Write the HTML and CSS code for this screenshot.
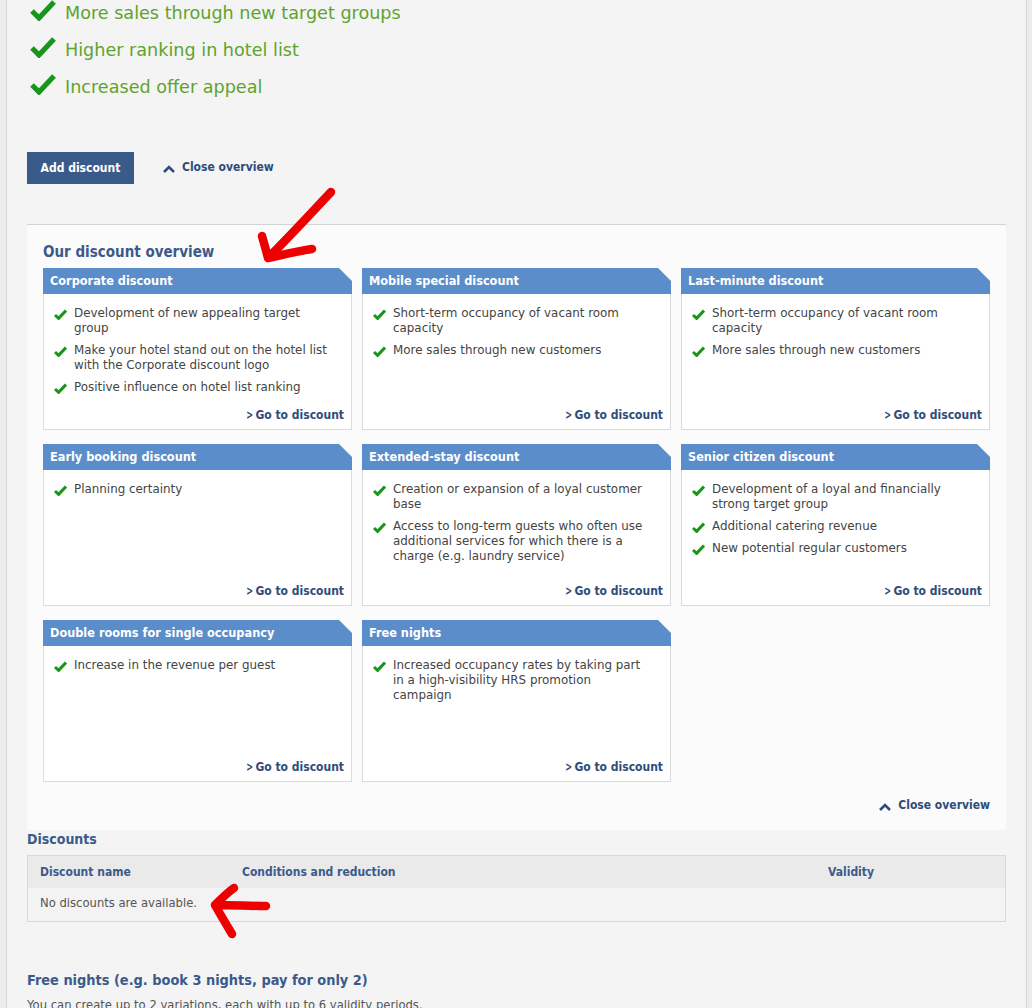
FILE: index.html
```html
<!DOCTYPE html>
<html lang="en">
<head>
<meta charset="utf-8">
<title>Discounts</title>
<link rel="stylesheet" href="styles.css">
</head>
<body>
<div class="page">
  <div class="main">
    <ul class="benefits">
      <li><svg class="bigcheck" viewBox="0 0 26 22"><path d="M2 12 L9 19 L24 3" /></svg>More sales through new target groups</li>
      <li><svg class="bigcheck" viewBox="0 0 26 22"><path d="M2 12 L9 19 L24 3" /></svg>Higher ranking in hotel list</li>
      <li><svg class="bigcheck" viewBox="0 0 26 22"><path d="M2 12 L9 19 L24 3" /></svg>Increased offer appeal</li>
    </ul>

    <div class="actions">
      <button class="btn">Add discount</button>
      <a class="toggle"><svg class="chev" viewBox="0 0 14 10"><path d="M2 8 L7 3 L12 8" /></svg>Close overview</a>
    </div>

    <section class="overview">
      <h2 class="ov-title">Our discount overview</h2>
      <div class="cards">
        <div class="card">
          <div class="card-head">Corporate discount</div>
          <div class="card-body">
            <ul class="points">
              <li>Development of new appealing target group</li>
              <li>Make your hotel stand out on the hotel list with the Corporate discount logo</li>
              <li>Positive influence on hotel list ranking</li>
            </ul>
            <a class="go"><span class="gt">&gt;</span>Go to discount</a>
          </div>
        </div>
        <div class="card">
          <div class="card-head">Mobile special discount</div>
          <div class="card-body">
            <ul class="points">
              <li>Short-term occupancy of vacant room capacity</li>
              <li>More sales through new customers</li>
            </ul>
            <a class="go"><span class="gt">&gt;</span>Go to discount</a>
          </div>
        </div>
        <div class="card">
          <div class="card-head">Last-minute discount</div>
          <div class="card-body">
            <ul class="points">
              <li>Short-term occupancy of vacant room capacity</li>
              <li>More sales through new customers</li>
            </ul>
            <a class="go"><span class="gt">&gt;</span>Go to discount</a>
          </div>
        </div>
        <div class="card">
          <div class="card-head">Early booking discount</div>
          <div class="card-body">
            <ul class="points">
              <li>Planning certainty</li>
            </ul>
            <a class="go"><span class="gt">&gt;</span>Go to discount</a>
          </div>
        </div>
        <div class="card">
          <div class="card-head">Extended-stay discount</div>
          <div class="card-body">
            <ul class="points">
              <li>Creation or expansion of a loyal customer base</li>
              <li>Access to long-term guests who often use additional services for which there is a charge (e.g. laundry service)</li>
            </ul>
            <a class="go"><span class="gt">&gt;</span>Go to discount</a>
          </div>
        </div>
        <div class="card">
          <div class="card-head">Senior citizen discount</div>
          <div class="card-body">
            <ul class="points">
              <li>Development of a loyal and financially strong target group</li>
              <li>Additional catering revenue</li>
              <li>New potential regular customers</li>
            </ul>
            <a class="go"><span class="gt">&gt;</span>Go to discount</a>
          </div>
        </div>
        <div class="card">
          <div class="card-head">Double rooms for single occupancy</div>
          <div class="card-body">
            <ul class="points">
              <li>Increase in the revenue per guest</li>
            </ul>
            <a class="go"><span class="gt">&gt;</span>Go to discount</a>
          </div>
        </div>
        <div class="card">
          <div class="card-head">Free nights</div>
          <div class="card-body">
            <ul class="points">
              <li>Increased occupancy rates by taking part in a high-visibility HRS promotion campaign</li>
            </ul>
            <a class="go"><span class="gt">&gt;</span>Go to discount</a>
          </div>
        </div>
      </div>
      <div class="ov-foot">
        <a class="toggle"><svg class="chev" viewBox="0 0 14 10"><path d="M2 8 L7 3 L12 8" /></svg>Close overview</a>
      </div>
    </section>

    <h3 class="sec-title">Discounts</h3>
    <div class="table">
      <div class="thead">
        <span class="c1">Discount name</span>
        <span class="c2">Conditions and reduction</span>
        <span class="c3">Validity</span>
      </div>
      <div class="tbody">No discounts are available.</div>
    </div>

    <h3 class="sec-title free">Free nights (e.g. book 3 nights, pay for only 2)</h3>
    <p class="note">You can create up to 2 variations, each with up to 6 validity periods.</p>
  </div>

  <svg class="arrow arrow1" viewBox="0 0 90 90" width="90" height="90">
    <path d="M77 6 C60 24 40 46 14 72 M14 72 C12 64 10 57 8 50 M14 72 C28 69 44 65 58 63" />
  </svg>
  <svg class="arrow arrow2" viewBox="0 0 80 60" width="80" height="60">
    <path d="M68 24 C52 24 36 23 17 23 M17 23 C24 16 30 10 36 6 M17 23 C22 32 28 42 34 52" />
  </svg>
</div>
</body>
</html>
```

FILE: styles.css
```css
* { box-sizing: border-box; }
html, body { margin: 0; padding: 0; }
body {
  background: #ececec;
  font-family: "DejaVu Sans", Verdana, sans-serif;
  color: #444;
  height: 1008px;
  overflow: hidden;
}
.page {
  position: relative;
  padding: 0 5px 0 6px;
}
.main {
  background: #f4f4f4;
  border-left: 1px solid #d6d6d6;
  border-right: 1px solid #d6d6d6;
  padding: 0 20px 0 20px;
  min-height: 1008px;
}

.benefits {
  list-style: none;
  margin: 0;
  padding: 0 0 0 3px;
  position: relative;
  top: -6px;
}
.benefits li {
  display: flex;
  align-items: center;
  height: 37px;
  font-size: 17.6px;
  color: #5ea32f;
}
.bigcheck {
  width: 26px;
  height: 22px;
  margin-right: 9px;
  margin-top: -6px;
}
.bigcheck path {
  fill: none;
  stroke: #17961b;
  stroke-width: 5.2;
  stroke-linecap: butt;
  stroke-linejoin: miter;
}

.actions {
  display: flex;
  align-items: center;
  margin-top: 41px;
  height: 32px;
}
.btn {
  background: #3a5a8a;
  color: #fff;
  border: 0;
  height: 32px;
  width: 107px;
  font-family: "DejaVu Sans Condensed", "DejaVu Sans", sans-serif;
  font-weight: bold;
  font-size: 12px;
  padding: 0;
  margin-right: 28px;
}
.toggle {
  display: inline-flex;
  align-items: center;
  color: #2f4c7a;
  font-family: "DejaVu Sans Condensed", "DejaVu Sans", sans-serif;
  font-weight: bold;
  font-size: 12px;
  margin-top: -2px;
}
.chev {
  width: 14px;
  height: 10px;
  margin-right: 6px;
  margin-top: 3px;
}
.chev path {
  fill: none;
  stroke: #2f4c7a;
  stroke-width: 2.6;
}

.overview {
  margin-top: 40px;
  border-top: 1px solid #d4d4d4;
  background: #fbfbfb;
  padding: 17px 15px 0 16px;
}
.ov-title {
  margin: 0;
  font-family: "DejaVu Sans Condensed", "DejaVu Sans", sans-serif;
  font-size: 15px;
  font-weight: bold;
  color: #3b5a8b;
  line-height: 20px;
  height: 26px;
}
.cards {
  display: grid;
  grid-template-columns: repeat(3, 309px);
  column-gap: 10px;
  row-gap: 14px;
}
.card {
  height: 162px;
  display: flex;
  flex-direction: column;
}
.card-head {
  background: #5b8dca;
  color: #fff;
  font-family: "DejaVu Sans Condensed", "DejaVu Sans", sans-serif;
  font-weight: bold;
  font-size: 12.6px;
  height: 26px;
  line-height: 25px;
  padding: 0 7px;
  clip-path: polygon(0 0, calc(100% - 13px) 0, 100% 13px, 100% 100%, 0 100%);
}
.card-body {
  flex: 1;
  background: #fff;
  border: 1px solid #dcdcdc;
  border-top: 0;
  display: flex;
  flex-direction: column;
  padding: 12px 7px 6px 9px;
}
.points {
  list-style: none;
  margin: 0;
  padding: 0;
  flex: 1;
}
.points li {
  position: relative;
  padding-left: 21px;
  font-size: 11.9px;
  line-height: 15px;
  color: #444;
  margin-bottom: 7px;
  padding-right: 10px;
}
.points li::before {
  content: "";
  position: absolute;
  left: 1px;
  top: 3px;
  width: 13px;
  height: 11px;
  background: no-repeat center / 13px 11px url("data:image/svg+xml,%3Csvg xmlns='http://www.w3.org/2000/svg' viewBox='0 0 13 11'%3E%3Cpath d='M1 6 L4.6 9.4 L12 1.5' fill='none' stroke='%2317961b' stroke-width='3'/%3E%3C/svg%3E");
}
.go {
  align-self: flex-end;
  display: inline-flex;
  align-items: center;
  color: #2f4c7a;
  font-family: "DejaVu Sans Condensed", "DejaVu Sans", sans-serif;
  font-weight: bold;
  font-size: 12px;
  line-height: 16px;
}
.gt {
  font-size: 12px;
  margin-right: 1px;
  transform: scaleX(0.75);
}
.ov-foot {
  display: flex;
  justify-content: flex-end;
  height: 48px;
  padding-top: 0;
  padding-right: 1px;
}

.sec-title {
  margin: 0;
  font-family: "DejaVu Sans Condensed", "DejaVu Sans", sans-serif;
  font-weight: bold;
  font-size: 14px;
  color: #3b5a8b;
  line-height: 18px;
  height: 25px;
}
.table {
  border: 1px solid #d8d8d8;
}
.thead {
  background: #eaeaea;
  height: 32px;
  display: flex;
  align-items: center;
  font-family: "DejaVu Sans Condensed", "DejaVu Sans", sans-serif;
  font-weight: bold;
  font-size: 12px;
  color: #3b5a8b;
  padding-left: 12px;
}
.c1 { width: 202px; }
.c2 { width: 586px; }
.tbody {
  background: #f3f3f3;
  height: 33px;
  line-height: 31px;
  padding-left: 12px;
  font-size: 11.6px;
  color: #555;
}
.free {
  margin-top: 49px;
  font-size: 14.4px;
  height: 27px;
}
.note {
  margin: 0;
  font-size: 11.6px;
  color: #555;
}

.arrow {
  position: absolute;
  overflow: visible;
}
.arrow path {
  fill: none;
  stroke: #ee0000;
  stroke-width: 8.5;
  stroke-linecap: round;
  stroke-linejoin: round;
}
.arrow1 { left: 254px; top: 186px; }
.arrow2 { left: 198px; top: 882px; }
```
